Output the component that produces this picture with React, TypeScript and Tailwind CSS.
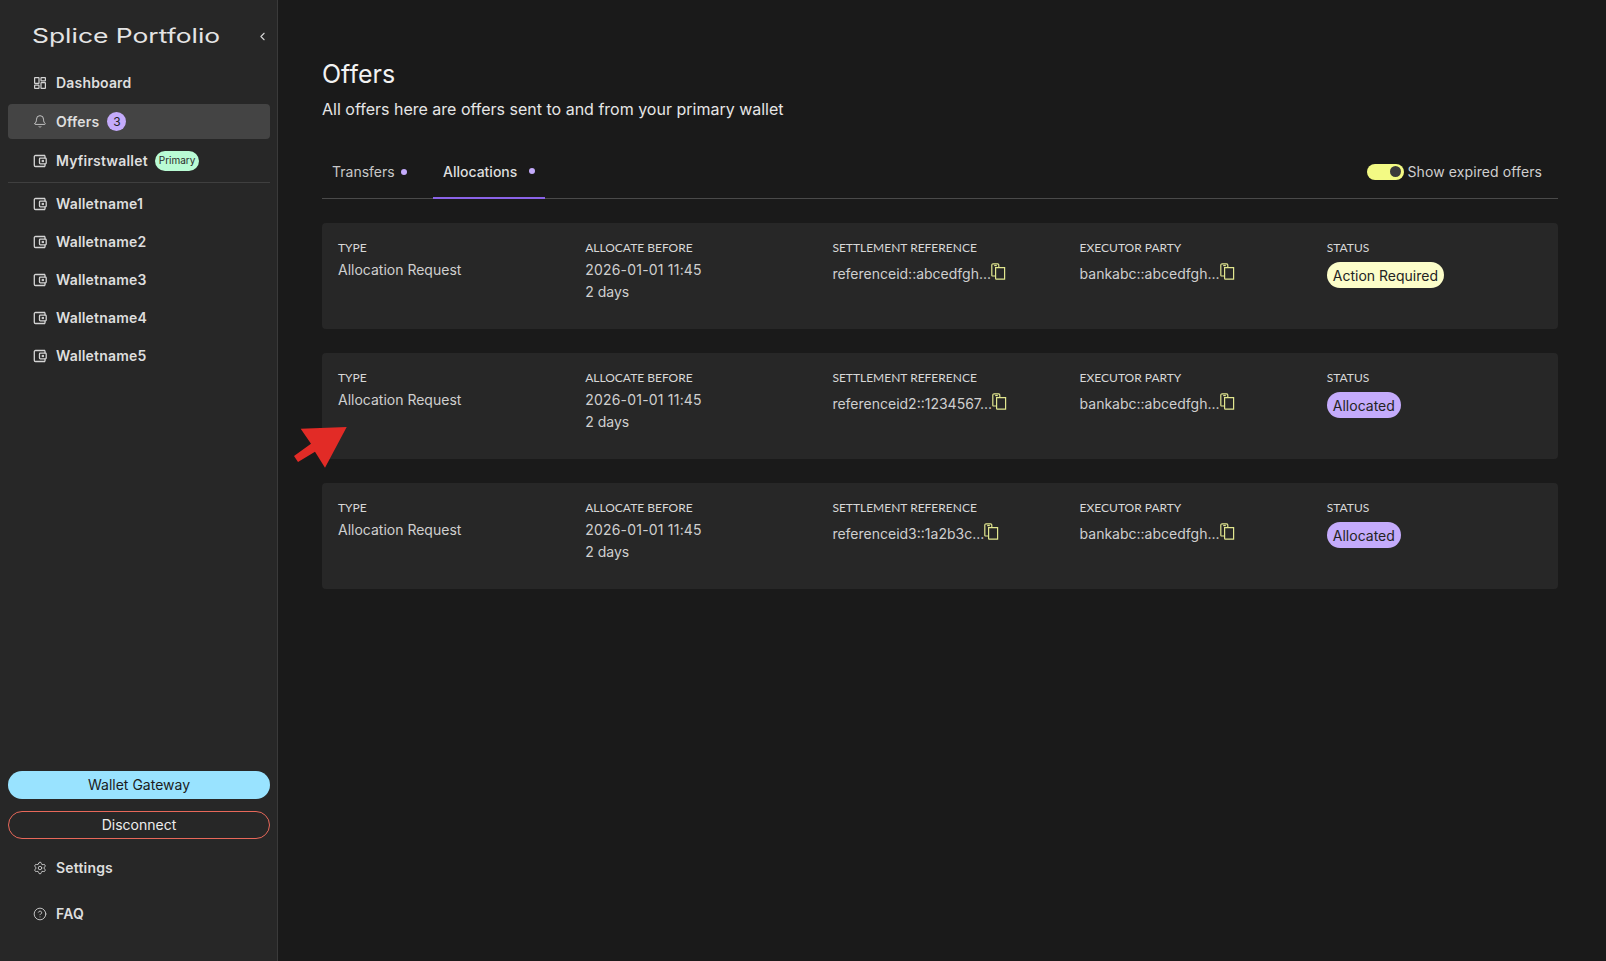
import { Bell, ChevronLeft, CircleHelp, Settings } from "lucide-react";

const inter = "font-['Inter',sans-serif]";

function DashboardIcon() {
  return (
    <svg width="14" height="14" viewBox="0 0 14 14" fill="none" stroke="#d4d4d4" strokeWidth="1.2">
      <rect x="1.6" y="1.6" width="4.4" height="5.8" rx="0.4" />
      <rect x="8" y="1.6" width="4.4" height="3.2" rx="0.4" />
      <rect x="8" y="6.6" width="4.4" height="5.8" rx="0.4" />
      <rect x="1.6" y="9.2" width="4.4" height="3.2" rx="0.4" />
    </svg>
  );
}

function WalletIcon() {
  return (
    <svg width="14" height="14" viewBox="0 0 14 14" fill="none" stroke="#d4d4d4" strokeWidth="1.3">
      <path d="M12 1.5H2.5A1.2 1.2 0 0 0 1.3 2.7v8.6a1.2 1.2 0 0 0 1.2 1.2H12" />
      <path d="M12 1.5v2.7M12 9.8v2.7" />
      <rect x="6.5" y="4.2" width="6.7" height="5.6" rx="0.8" />
      <rect x="9" y="6.2" width="1.7" height="1.6" fill="#d4d4d4" strokeWidth="0.6" />
    </svg>
  );
}

function CopyIcon() {
  return (
    <svg width="15" height="17" viewBox="0 0 15 17" fill="none" stroke="#e2e78f" strokeWidth="1.2" className="mt-[2px] shrink-0">
      <path d="M4.6 15V4.6h9v11.6H5.2a.6.6 0 0 1-.6-.6z" />
      <path d="M4.6 13H1.5a.7.7 0 0 1-.7-.7V2.2c0-.8.6-1.4 1.4-1.4h4.4c.7 0 1.2.5 1.2 1.2v2.6" />
      <path d="M3.2 2.6h2.6" />
    </svg>
  );
}

function NavItem({ icon, label, extra, active }: { icon: React.ReactNode; label: string; extra?: React.ReactNode; active?: boolean }) {
  return (
    <div className={`flex h-[35px] items-center gap-[9px] rounded-[4px] pl-[25px] ${active ? "bg-[#444444]" : ""}`}>
      <span className="flex w-[14px] shrink-0 items-center justify-center">{icon}</span>
      <span className="text-[14px] font-semibold tracking-[0.18px] text-[#dedede]">{label}</span>
      {extra}
    </div>
  );
}

const wallets = ["Walletname1", "Walletname2", "Walletname3", "Walletname4", "Walletname5"];

const rows = [
  { ref: "referenceid::abcedfgh...", status: "Action Required", pill: "bg-[#fcfdc9]" },
  { ref: "referenceid2::1234567...", status: "Allocated", pill: "bg-[#c4abfb]" },
  { ref: "referenceid3::1a2b3c...", status: "Allocated", pill: "bg-[#c4abfb]" },
];

function Label({ children }: { children: React.ReactNode }) {
  return <div className="font-['Lato',sans-serif] text-[12px] leading-[18px] text-[#d8d8d8]">{children}</div>;
}

function Row({ r }: { r: (typeof rows)[number] }) {
  return (
    <div className="grid h-[106px] grid-cols-5 gap-8 rounded-[4px] bg-[#272727] px-4 pt-[16px]">
      <div>
        <Label>TYPE</Label>
        <div className="mt-[2px] text-[14px] leading-[22px] text-[#cfcfcf]">Allocation Request</div>
      </div>
      <div>
        <Label>ALLOCATE BEFORE</Label>
        <div className="mt-[2px] text-[14px] leading-[22px] tracking-[0.2px] text-[#cfcfcf]">2026-01-01 11:45</div>
        <div className="text-[14px] leading-[22px] text-[#cfcfcf]">2 days</div>
      </div>
      <div>
        <Label>SETTLEMENT REFERENCE</Label>
        <div className="mt-[4px] flex items-start text-[14px] leading-[22px] text-[#cfcfcf]">
          <span className="mt-[2px]">{r.ref}</span>
          <CopyIcon />
        </div>
      </div>
      <div>
        <Label>EXECUTOR PARTY</Label>
        <div className="mt-[4px] flex items-start text-[14px] leading-[22px] text-[#cfcfcf]">
          <span className="mt-[2px]">bankabc::abcedfgh...</span>
          <CopyIcon />
        </div>
      </div>
      <div>
        <Label>STATUS</Label>
        <div className={`mt-[5px] inline-flex h-[26px] items-center rounded-full px-[6px] pt-px text-[14px] text-[#232323] ${r.pill}`}>{r.status}</div>
      </div>
    </div>
  );
}

export default function App() {
  return (
    <div className={`relative flex h-[961px] w-full overflow-hidden bg-[#1a1a1a] ${inter}`}>
      <aside className="flex h-full w-[278px] shrink-0 flex-col border-r border-[#3a3a3a] bg-[#272727] pr-[7px] pl-2">
        <div className="flex h-[65px] shrink-0 items-center justify-between pt-[7px] pr-px pl-6">
          <span className="origin-left scale-x-[1.32] text-[20px] font-normal whitespace-nowrap text-[#e4e4e4]">Splice Portfolio</span>
          <ChevronLeft size={13} color="#d4d4d4" strokeWidth={2} />
        </div>
        <NavItem icon={<DashboardIcon />} label="Dashboard" />
        <div className="mt-[4px]">
          <NavItem
            active
            icon={<Bell size={17} color="#d4d4d4" strokeWidth={1.5} />}
            label="Offers"
            extra={<span className="-ml-[1px] flex h-[19px] w-[19px] items-center justify-center rounded-full bg-[#c4abfb] text-[12px] text-[#232323]">3</span>}
          />
        </div>
        <div className="mt-[4px]">
          <NavItem
            icon={<WalletIcon />}
            label="Myfirstwallet"
            extra={<span className="-ml-[2px] flex h-[20px] items-center rounded-full bg-[#b9fbd4] px-[4px] text-[10px] text-[#2a2a2a]">Primary</span>}
          />
        </div>
        <div className="mt-[4px] mb-[3px] h-px shrink-0 bg-[#3f3f3f]" />
        {wallets.map((w) => (
          <div key={w} className="mb-[3px]">
            <NavItem icon={<WalletIcon />} label={w} />
          </div>
        ))}
        <div className="mt-auto flex h-[28px] shrink-0 items-center justify-center rounded-full bg-[#99e3ff] pb-px text-[14px] text-[#1c1c1c]">Wallet Gateway</div>
        <div className="mt-[12px] flex h-[28px] shrink-0 items-center justify-center rounded-full border border-[#e8685a] pb-px text-[14px] text-[#ededed]">Disconnect</div>
        <div className="mt-[11px]">
          <NavItem icon={<Settings size={16} color="#d4d4d4" strokeWidth={1.5} />} label="Settings" />
        </div>
        <div className="mt-[11px] mb-[30px]">
          <NavItem icon={<CircleHelp size={16} color="#d4d4d4" strokeWidth={1.5} />} label="FAQ" />
        </div>
      </aside>

      <main className="min-w-0 flex-1 pt-[58px] pr-[48px] pl-[44px]">
        <h1 className="text-[25px] leading-[32px] font-normal text-[#f2f2f2]">Offers</h1>
        <p className="mt-[7px] text-[16px] leading-[24px] text-[#e6e6e6]">All offers here are offers sent to and from your primary wallet</p>

        <div className="mt-[22px] flex h-[56px] items-stretch justify-between border-b border-[#4a4a4a]">
          <div className="flex">
            <div className="flex w-[111px] items-center pt-[2px] pl-[10px] text-[14px] text-[#c8c8c8]">
              Transfers
              <span className="ml-[6px] h-[6px] w-[6px] rounded-full bg-[#c4abfb]" />
            </div>
            <div className="-mb-px flex w-[112px] items-center border-b-2 border-[#8a63e8] pt-[2px] pl-[10px] text-[14px] font-medium text-[#dedede]">
              Allocations
              <span className="ml-[12px] h-[6px] w-[6px] rounded-full bg-[#c4abfb]" />
            </div>
          </div>
          <div className="flex items-center gap-[4px] pt-[2px] pr-[16px] text-[14px] tracking-[0.1px] text-[#cfcfcf]">
            <span className="flex h-[16px] w-[37px] items-center justify-end rounded-full bg-[#f3fa84] pr-[3px]">
              <span className="h-[11px] w-[11px] rounded-full bg-[#3b3b3b]" />
            </span>
            Show expired offers
          </div>
        </div>

        <div className="mt-[24px] flex flex-col gap-6">
          {rows.map((r) => (
            <Row key={r.ref} r={r} />
          ))}
        </div>
      </main>

      <svg className="absolute top-[425px] left-[292px]" width="58" height="46" viewBox="292 425 58 46">
        <polygon points="300.7,428.7 346.7,427 325,467.7 315,451.7 298,462 294,456 311,443.7" fill="#e22b26" />
      </svg>
    </div>
  );
}
